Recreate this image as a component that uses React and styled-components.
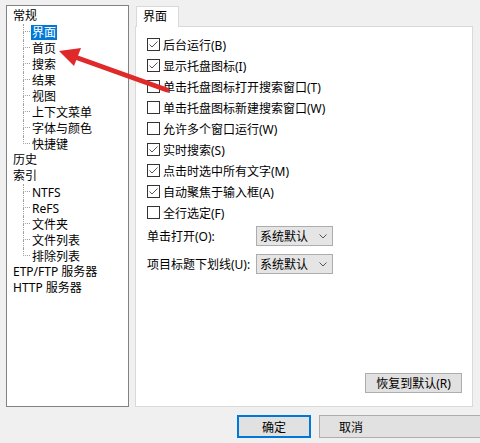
import React from "react";
import styled, { createGlobalStyle } from "styled-components";

const GlobalStyle = createGlobalStyle`
  html, body {
    margin: 0;
    padding: 0;
    background: #f0f0f0;
  }
  * {
    box-sizing: border-box;
  }
`;

const Window = styled.div`
  position: relative;
  width: 480px;
  height: 443px;
  overflow: hidden;
  background: #f0f0f0;
  font-family: "Noto Sans", "Noto Sans CJK SC", sans-serif;
  font-size: 12px;
  color: #000;
  display: flex;
  flex-direction: column;
`;

const Body = styled.div`
  display: flex;
  padding: 5px 0 0 6px;
  gap: 6px;
  height: 407px;
`;

const Tree = styled.div`
  width: 123px;
  height: 402px;
  background: #fff;
  border: 1px solid #828282;
  padding: 2px 0 0 6px;
`;

const Node = styled.div`
  display: flex;
  align-items: center;
  height: 16px;
  line-height: 16px;
  white-space: nowrap;
`;

const Group = styled.div`
  display: flex;
  flex-direction: column;
  padding-left: 10px;
`;

const Connector = styled.div`
  width: 7px;
  height: 16px;
  display: flex;
  flex-direction: column;
  flex-shrink: 0;
`;

const ConnTop = styled.div`
  height: 8px;
  border-left: 1px dotted #a0a0a0;
  border-bottom: 1px dotted #a0a0a0;
`;

const ConnBottom = styled.div`
  height: 8px;
  border-left: 1px dotted ${(p) => (p.$last ? "transparent" : "#a0a0a0")};
`;

const NodeLabel = styled.span`
  margin-left: 1px;
  padding: 0 1px;
  height: 15px;
  line-height: 15px;
  background: ${(p) => (p.$selected ? "#0078d7" : "transparent")};
  color: ${(p) => (p.$selected ? "#fff" : "#000")};
`;

const Right = styled.div`
  display: flex;
  flex-direction: column;
  width: 338px;
  padding-top: 1px;
`;

const TabStrip = styled.div`
  display: flex;
  padding-left: 1px;
  height: 20px;
`;

const Tab = styled.div`
  position: relative;
  z-index: 1;
  height: 21px;
  padding: 0 6px;
  width: 43px;
  line-height: 19px;
  background: #fff;
  border: 1px solid #d9d9d9;
  border-bottom: none;
`;

const Panel = styled.div`
  flex: 1;
  height: 381px;
  background: #fff;
  border: 1px solid #d9d9d9;
  display: flex;
  flex-direction: column;
  padding: 7px 10px 13px 11px;
`;

const CheckRow = styled.label`
  display: flex;
  align-items: center;
  height: 21px;
  gap: 3px;
  white-space: nowrap;
`;

const Box = styled.span`
  width: 13px;
  height: 13px;
  border: 1px solid #333;
  background: #fff;
  display: flex;
  align-items: center;
  justify-content: center;
  flex-shrink: 0;
`;

const FieldRow = styled.div`
  display: flex;
  align-items: center;
  height: 20px;
  margin-top: ${(p) => p.$top}px;
`;

const FieldLabel = styled.span`
  width: 109px;
  white-space: nowrap;
`;

const Select = styled.div`
  width: 77px;
  height: 20px;
  background: #e5e5e5;
  border: 1px solid #adadad;
  display: flex;
  align-items: center;
  justify-content: space-between;
  padding: 0 5px 0 3px;
`;

const RestoreButton = styled.button`
  margin-top: auto;
  align-self: flex-end;
  width: 97px;
  height: 20px;
  background: #e1e1e1;
  border: 1px solid #adadad;
  font: inherit;
  padding: 0;
  color: #000;
`;

const Footer = styled.div`
  display: flex;
  gap: 8px;
  padding: 8px 0 0 237px;
`;

const Button = styled.button`
  height: 23px;
  width: ${(p) => p.$width}px;
  flex-shrink: 0;
  background: #e1e1e1;
  border: ${(p) => (p.$default ? "2px solid #0078d7" : "1px solid #adadad")};
  font: inherit;
  color: #000;
  padding: ${(p) => (p.$default ? "0" : "0 0 0 19px")};
  text-align: ${(p) => (p.$default ? "center" : "left")};
`;

const Overlay = styled.svg`
  position: absolute;
  left: 0;
  top: 0;
  pointer-events: none;
`;

const Check = () => (
  <svg width="11" height="11" viewBox="0 0 11 11">
    <polyline points="1.5,5.5 4,8 9.5,2.5" fill="none" stroke="#555" strokeWidth="1" />
  </svg>
);

const Chevron = () => (
  <svg width="8" height="5" viewBox="0 0 8 5">
    <polyline points="0.5,0.5 4,4 7.5,0.5" fill="none" stroke="#555" strokeWidth="1" />
  </svg>
);

const tree = [
  {
    label: "常规",
    children: ["界面", "首页", "搜索", "结果", "视图", "上下文菜单", "字体与颜色", "快捷键"],
  },
  { label: "历史" },
  { label: "索引", children: ["NTFS", "ReFS", "文件夹", "文件列表", "排除列表"] },
  { label: "ETP/FTP 服务器" },
  { label: "HTTP 服务器" },
];

const options = [
  ["后台运行(B)", true],
  ["显示托盘图标(I)", true],
  ["单击托盘图标打开搜索窗口(T)", false],
  ["单击托盘图标新建搜索窗口(W)", false],
  ["允许多个窗口运行(W)", false],
  ["实时搜索(S)", true],
  ["点击时选中所有文字(M)", true],
  ["自动聚焦于输入框(A)", true],
  ["全行选定(F)", false],
];

const App = () => {
  return (
    <Window>
      <GlobalStyle />
      <Body>
        <Tree>
          {tree.map((n) => (
            <div key={n.label}>
              <Node>{n.label}</Node>
              {n.children && (
                <Group>
                  {n.children.map((c, i) => (
                    <Node key={c}>
                      <Connector>
                        <ConnTop />
                        <ConnBottom $last={i === n.children.length - 1} />
                      </Connector>
                      <NodeLabel $selected={c === "界面"}>{c}</NodeLabel>
                    </Node>
                  ))}
                </Group>
              )}
            </div>
          ))}
        </Tree>
        <Right>
          <TabStrip>
            <Tab>界面</Tab>
          </TabStrip>
          <Panel>
            {options.map(([text, on]) => (
              <CheckRow key={text}>
                <Box>{on && <Check />}</Box>
                {text}
              </CheckRow>
            ))}
            <FieldRow $top={3}>
              <FieldLabel>单击打开(O):</FieldLabel>
              <Select>
                系统默认
                <Chevron />
              </Select>
            </FieldRow>
            <FieldRow $top={8}>
              <FieldLabel>项目标题下划线(U):</FieldLabel>
              <Select>
                系统默认
                <Chevron />
              </Select>
            </FieldRow>
            <RestoreButton>恢复到默认(R)</RestoreButton>
          </Panel>
        </Right>
      </Body>
      <Footer>
        <Button $default $width={74}>确定</Button>
        <Button $width={165}>取消</Button>
      </Footer>
      <Overlay width="480" height="443" viewBox="0 0 480 443">
        <line x1="75" y1="57" x2="167" y2="90" stroke="#e02a2a" strokeWidth="5" strokeLinecap="round" />
        <polygon points="59,51 81,48 74,66" fill="#e02a2a" />
      </Overlay>
    </Window>
  );
};

export default App;
